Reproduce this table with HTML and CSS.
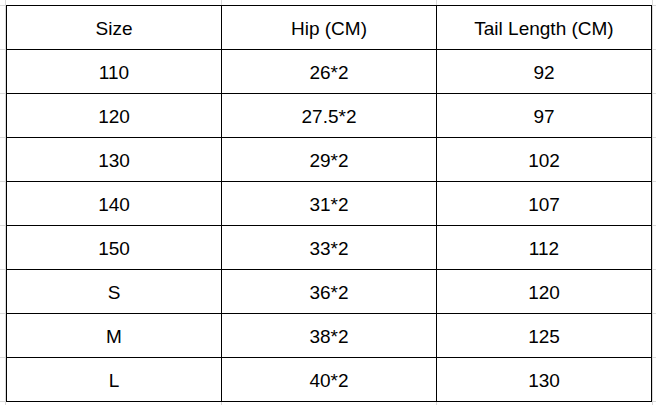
FILE: index.html
```html
<!DOCTYPE html>
<html>
<head>
<meta charset="utf-8">
<link rel="stylesheet" href="styles.css">
</head>
<body>
<div class="sheet">
  <div class="grid">
    <div class="cell">Size</div><div class="cell">Hip (CM)</div><div class="cell">Tail Length (CM)</div>
    <div class="cell">110</div><div class="cell">26*2</div><div class="cell">92</div>
    <div class="cell">120</div><div class="cell">27.5*2</div><div class="cell">97</div>
    <div class="cell">130</div><div class="cell">29*2</div><div class="cell">102</div>
    <div class="cell">140</div><div class="cell">31*2</div><div class="cell">107</div>
    <div class="cell">150</div><div class="cell">33*2</div><div class="cell">112</div>
    <div class="cell">S</div><div class="cell">36*2</div><div class="cell">120</div>
    <div class="cell">M</div><div class="cell">38*2</div><div class="cell">125</div>
    <div class="cell">L</div><div class="cell">40*2</div><div class="cell">130</div>
  </div>
</div>
</body>
</html>
```
FILE: styles.css
```css
html, body {
  margin: 0;
  padding: 0;
}
body {
  width: 656px;
  height: 405px;
  overflow: hidden;
  background-color: #fff;
  background-image:
    repeating-linear-gradient(to bottom, transparent 0, transparent 5px, #d9d9d9 5px, #d9d9d9 6px, transparent 6px, transparent 44px),
    linear-gradient(to right, transparent 5px, #d9d9d9 5px, #d9d9d9 6px, transparent 6px, transparent 221px, #d9d9d9 221px, #d9d9d9 222px, transparent 222px, transparent 436px, #d9d9d9 436px, #d9d9d9 437px, transparent 437px, transparent 652px, #d9d9d9 652px, #d9d9d9 653px, transparent 653px);
  font-family: "Liberation Sans", Arial, sans-serif;
}
.sheet {
  padding: 5px 0 0 6px;
}
.grid {
  display: grid;
  grid-template-columns: repeat(3, 215px);
  grid-auto-rows: 44px;
  width: max-content;
  border-left: 1px solid #000;
  border-top: 1px solid #000;
  background: #fff;
}
.cell {
  border-right: 1px solid #000;
  border-bottom: 1px solid #000;
  display: flex;
  align-items: center;
  justify-content: center;
  padding-top: 2px;
  font-size: 19px;
  color: #000;
}
```
